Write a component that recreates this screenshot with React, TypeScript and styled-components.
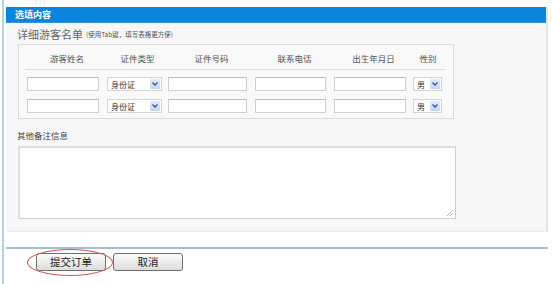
import React from "react";
import styled, { createGlobalStyle } from "styled-components";

const Global = createGlobalStyle`
  html, body { margin: 0; padding: 0; background: #fff; }
  body { font-family: "Noto Sans CJK SC", "Noto Sans", sans-serif; color: #444; }
  * { box-sizing: border-box; }
`;

const Page = styled.div`
  width: 553px;
  height: 284px;
  padding-left: 2px;
  overflow: hidden;
`;

const Frame = styled.div`
  height: 284px;
  border-left: 2px solid #b4d3e0;
  padding: 7px 0 0 2px;
`;

const Section = styled.div`
  width: 542px;
  border-right: 2px solid #e6e6e6;
`;

const HeaderBar = styled.div`
  height: 16px;
  background: #0a85de;
  border-bottom: 1px solid #3a93d6;
  color: #fff;
  font-size: 9px;
  font-weight: bold;
  line-height: 15px;
  padding-left: 9px;
`;

const Body = styled.div`
  background: #f7f7f7;
  padding: 4px 0 12px 11px;
  border-bottom: 1px solid #ececec;
`;

const Intro = styled.div`
  font-size: 11px;
  line-height: 14px;
  color: #666;
  display: flex;
  align-items: center;
  gap: 3px;
`;

const Hint = styled.span`
  font-size: 6.5px;
  color: #555;
`;

const GuestBox = styled.div`
  margin: 3px 0 0 1px;
  width: 436px;
  border: 1px solid #dadada;
  background: #f9f9f9;
  padding: 0 0 5px 8px;
`;

const Grid = styled.div`
  display: grid;
  grid-template-columns: 80px 61px 87px 79px 79px 30px;
`;

const HeadCell = styled.div`
  height: 24px;
  font-size: 8.5px;
  color: #555;
  display: flex;
  align-items: center;
  justify-content: center;
  padding-top: 1px;
`;

const Rule = styled.div`
  height: 1px;
  background: #dddddd;
  margin: 0 7px 0 -2px;
`;

const Rows = styled.div`
  display: flex;
  flex-direction: column;
  gap: 8px;
  padding-top: 7px;
`;

const TextBox = styled.div<{ $w: number }>`
  width: ${(p) => p.$w}px;
  height: 14px;
  background: #fff;
  border: 1px solid #cfcfcf;
  border-top-color: #bdbdbd;
`;

const SelectBox = styled.div<{ $w: number }>`
  width: ${(p) => p.$w}px;
  height: 14px;
  background: #fff;
  border: 1px solid #d4d4d4;
  display: flex;
  align-items: center;
  justify-content: space-between;
  padding: 0 1px 0 3px;
  font-size: 8px;
  color: #333;
`;

const Arrow = styled.span`
  width: 10px;
  height: 10px;
  background: linear-gradient(#e3ebf9, #c4d4ef);
  border-radius: 1px;
  display: flex;
  align-items: center;
  justify-content: center;
`;

const NoteLabel = styled.div`
  margin-top: 11px;
  font-size: 8.5px;
  line-height: 10px;
  color: #444;
`;

const NoteArea = styled.div`
  position: relative;
  margin: 6px 0 0 1px;
  width: 438px;
  height: 73px;
  background: #fff;
  border: 1px solid #d0d0d0;
  border-top: 2px solid #dedede;
  border-left: 2px solid #dedede;
`;

const Grip = styled.svg`
  position: absolute;
  right: 1px;
  bottom: 1px;
`;

const Footer = styled.div`
  margin-top: 15px;
  width: 542px;
  border-top: 2px solid #a3bfd0;
  padding: 4px 0 0 30px;
`;

const ButtonRow = styled.div`
  position: relative;
  display: flex;
  gap: 7px;
`;

const Button = styled.button`
  width: 70px;
  height: 18px;
  border: 1px solid #707070;
  border-radius: 3px;
  background: linear-gradient(#fbfbfb, #ececec 50%, #dcdcdc);
  font-family: "Noto Sans CJK SC", sans-serif;
  font-size: 10.5px;
  line-height: 14px;
  color: #222;
  padding: 0;
`;

const Ellipse = styled.div`
  position: absolute;
  left: -9px;
  top: -4px;
  width: 86px;
  height: 27px;
  border: 1px solid #d05a5a;
  border-radius: 50%;
  pointer-events: none;
`;

const Chevron = () => (
  <svg width="6" height="4" viewBox="0 0 6 4">
    <path d="M0.5 0.5 L3 3 L5.5 0.5" stroke="#2a55a8" strokeWidth="1.3" fill="none" />
  </svg>
);

const Select = ({ w, text }: { w: number; text: string }) => (
  <SelectBox $w={w}>
    <span>{text}</span>
    <Arrow>
      <Chevron />
    </Arrow>
  </SelectBox>
);

const heads = ["游客姓名", "证件类型", "证件号码", "联系电话", "出生年月日", "性别"];

const GuestRow = () => (
  <Grid>
    <TextBox $w={72} />
    <Select w={55} text="身份证" />
    <TextBox $w={79} />
    <TextBox $w={71} />
    <TextBox $w={72} />
    <Select w={29} text="男" />
  </Grid>
);

export default function App() {
  return (
    <Page>
      <Global />
      <Frame>
        <Section>
          <HeaderBar>选填内容</HeaderBar>
          <Body>
            <Intro>
              详细游客名单<Hint>(使用Tab键，填写表格更方便)</Hint>
            </Intro>
            <GuestBox>
              <Grid>
                {heads.map((h) => (
                  <HeadCell key={h}>{h}</HeadCell>
                ))}
              </Grid>
              <Rule />
              <Rows>
                <GuestRow />
                <GuestRow />
              </Rows>
            </GuestBox>
            <NoteLabel>其他备注信息</NoteLabel>
            <NoteArea>
              <Grip width="8" height="8" viewBox="0 0 8 8">
                <path d="M7 1 L1 7 M7 4 L4 7" stroke="#bbb" strokeWidth="1" />
              </Grip>
            </NoteArea>
          </Body>
        </Section>
        <Footer>
          <ButtonRow>
            <Button>提交订单</Button>
            <Button>取消</Button>
            <Ellipse />
          </ButtonRow>
        </Footer>
      </Frame>
    </Page>
  );
}
